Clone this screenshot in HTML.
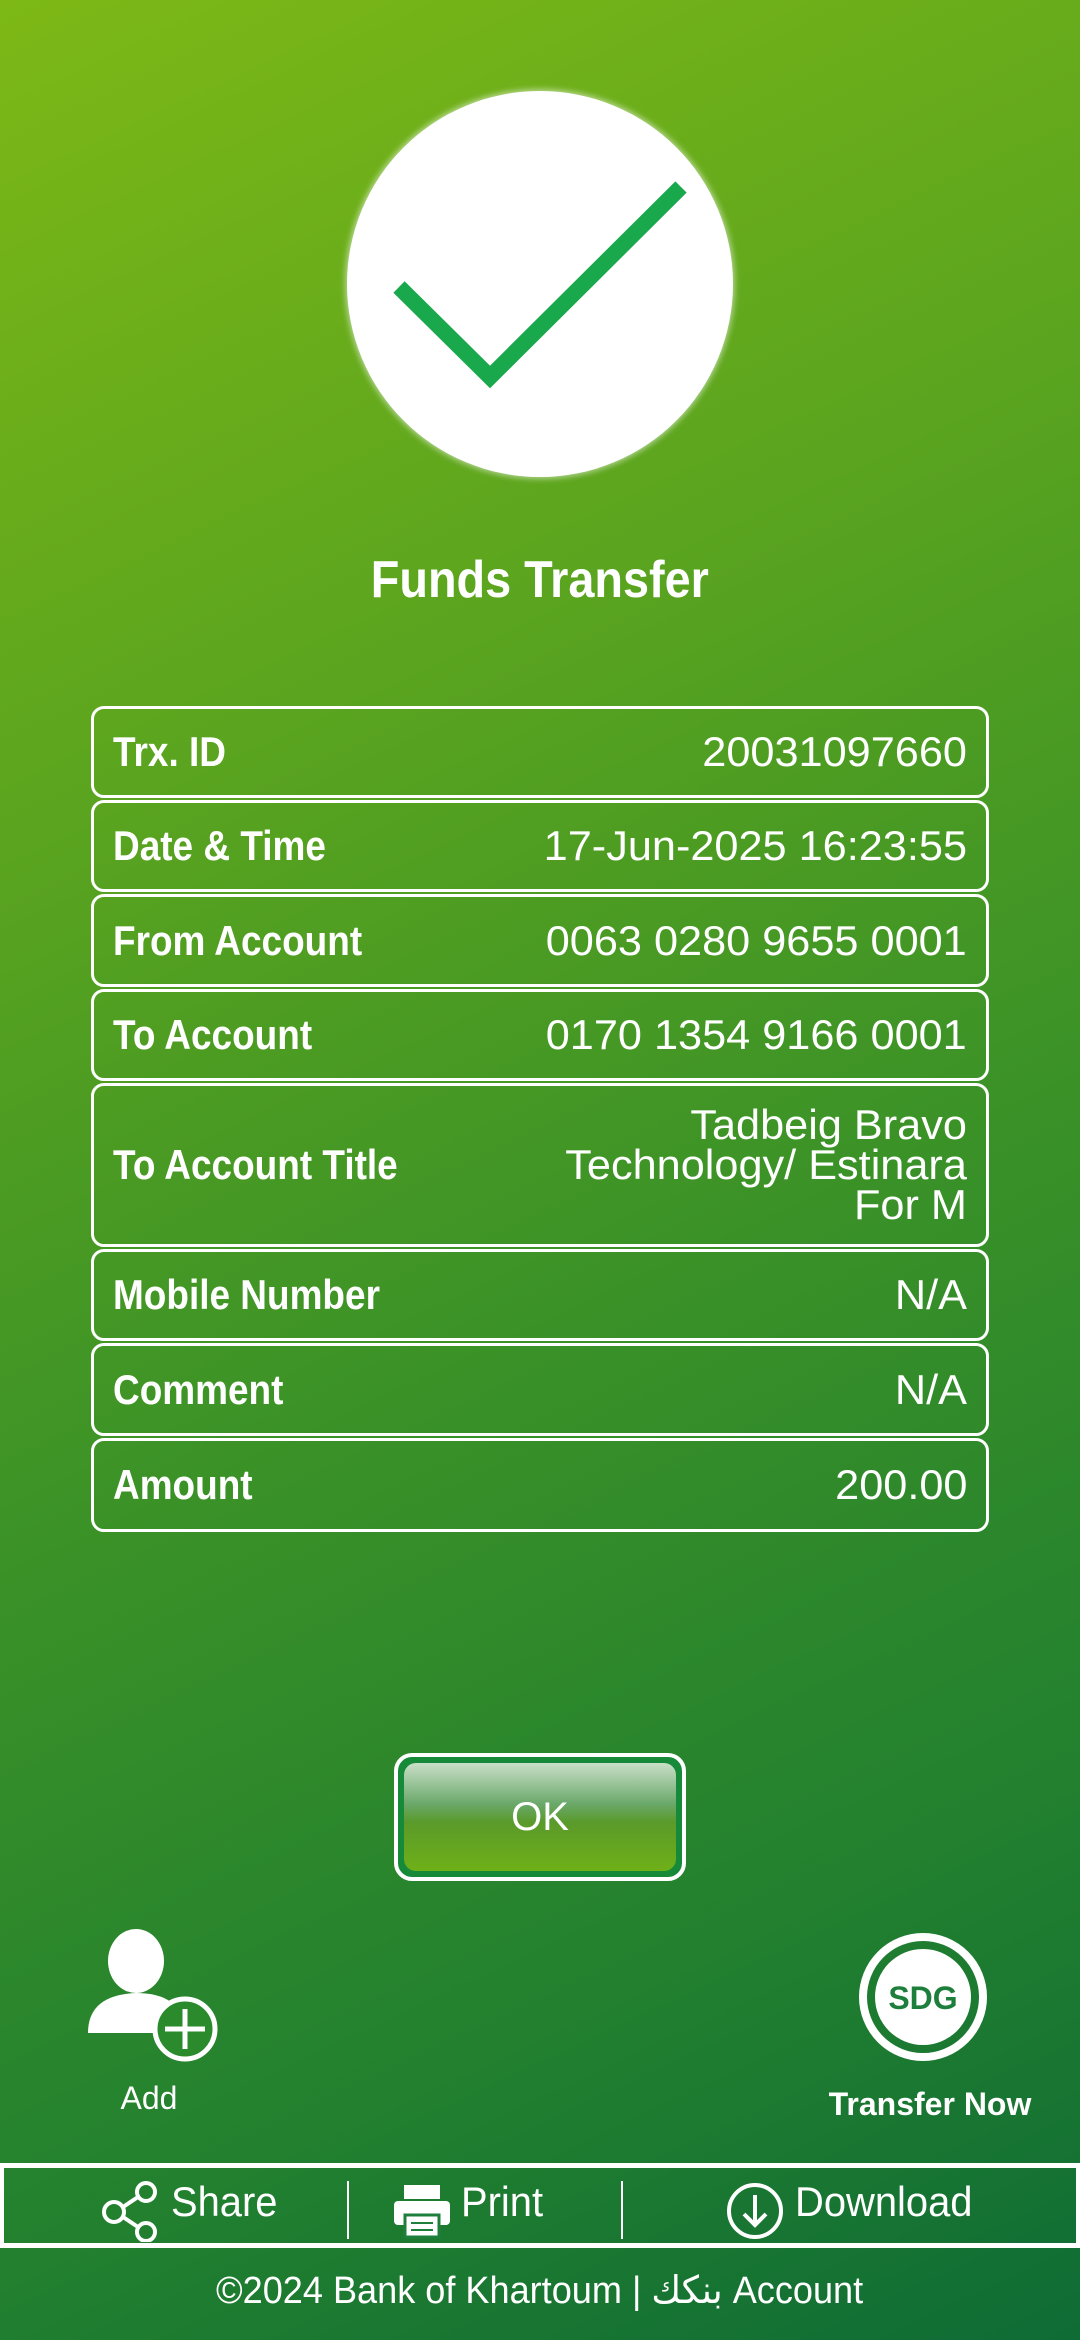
<!DOCTYPE html>
<html><head><meta charset="utf-8"><style>
*{margin:0;padding:0;box-sizing:border-box}
body{width:1080px;height:2340px;overflow:hidden;position:relative;background:linear-gradient(155deg,#7db816 0%,#5aa41f 30%,#3b9227 55%,#22802f 80%,#0f6c35 100%);font-family:"Liberation Sans","DejaVu Sans",sans-serif;color:#fff}
.abs{position:absolute}
.circle{left:347px;top:91px;width:386px;height:386px;border-radius:50%;background:#fff;box-shadow:0 0 6px 2px rgba(255,255,255,.5)}
h1{position:absolute;top:550px;left:0;width:1080px;text-align:center;font-size:52px;font-weight:bold}
h1 span{display:inline-block;transform:scaleX(.9)}
.row{position:absolute;left:91px;width:898px;border:3px solid #fff;border-radius:13px;display:flex;align-items:center;justify-content:space-between;padding:0 19px;font-size:42px}
.row .l{font-weight:bold;display:inline-block;transform:scaleX(.88);transform-origin:left center;white-space:nowrap}
.row .r{text-align:right;line-height:40px;display:inline-block;transform:scaleX(1.03);transform-origin:right center;white-space:nowrap}
.ok{left:394px;top:1753px;width:292px;height:128px;border:4px solid #fff;border-radius:18px;background:#178a3a;padding:6px}
.ok div{width:100%;height:100%;border-radius:12px;background:linear-gradient(#c9dfc8 0%,#6aa86a 38%,#5a9a2a 55%,#6fb018 100%);display:flex;align-items:center;justify-content:center;font-size:40px}
.bar{left:0;top:2163px;width:1080px;height:85px;border:5px solid #fff;border-left-width:4px;border-right-width:4px}
.bt{position:absolute;font-size:42px;top:2178px;transform:scaleX(.95);transform-origin:left center}
.div{position:absolute;top:2181px;width:2px;height:58px;background:#fff}
</style></head><body>
<div class="abs circle"></div>
<svg class="abs" style="left:0;top:0" width="1080" height="500"><polyline points="399,287 490,377 681,187" fill="none" stroke="#1aa84c" stroke-width="16"/></svg>
<h1><span>Funds Transfer</span></h1>
<div class="row" style="top:706px;height:92px"><span class="l">Trx. ID</span><span class="r">20031097660</span></div>
<div class="row" style="top:800px;height:92px"><span class="l">Date &amp; Time</span><span class="r">17-Jun-2025 16:23:55</span></div>
<div class="row" style="top:894px;height:93px"><span class="l">From Account</span><span class="r">0063 0280 9655 0001</span></div>
<div class="row" style="top:989px;height:92px"><span class="l">To Account</span><span class="r">0170 1354 9166 0001</span></div>
<div class="row" style="top:1083px;height:164px"><span class="l">To Account Title</span><span class="r">Tadbeig Bravo<br>Technology/ Estinara<br>For M</span></div>
<div class="row" style="top:1249px;height:92px"><span class="l">Mobile Number</span><span class="r">N/A</span></div>
<div class="row" style="top:1343px;height:93px"><span class="l">Comment</span><span class="r">N/A</span></div>
<div class="row" style="top:1438px;height:94px"><span class="l">Amount</span><span class="r">200.00</span></div>
<div class="abs ok"><div>OK</div></div>
<svg class="abs" style="left:80px;top:1925px" width="150" height="145">
<ellipse cx="56" cy="36" rx="28" ry="32" fill="#fff"/>
<path d="M8 108 Q8 70 56 68 Q90 68 100 88 L100 108 Z" fill="#fff"/>
<circle cx="105" cy="104" r="30" fill="#2a8a2c" stroke="#fff" stroke-width="5"/>
<path d="M105 84v40M85 104h40" stroke="#fff" stroke-width="5"/>
</svg>
<div class="abs" style="left:109px;top:2080px;font-size:32px;width:80px;text-align:center">Add</div>
<svg class="abs" style="left:856px;top:1930px" width="134" height="134">
<circle cx="67" cy="67" r="60" fill="none" stroke="#fff" stroke-width="8"/>
<circle cx="67" cy="67" r="48" fill="#fff"/>
<text x="67" y="79" text-anchor="middle" font-family="Liberation Sans" font-weight="bold" font-size="32" fill="#1e7f3c">SDG</text>
</svg>
<div class="abs" style="left:810px;top:2086px;font-size:32px;width:240px;text-align:center;font-weight:bold">Transfer Now</div>
<div class="abs bar"></div>
<svg class="abs" style="left:100px;top:2180px" width="64" height="62"><g fill="none" stroke="#fff" stroke-width="4"><circle cx="14" cy="32" r="10"/><circle cx="46" cy="12" r="9"/><circle cx="46" cy="52" r="9"/><path d="M23 27l15-10M23 37l15 10"/></g></svg>
<div class="bt" style="left:171px">Share</div>
<div class="div" style="left:347px"></div>
<svg class="abs" style="left:392px;top:2183px" width="60" height="56"><path d="M12 2h36v14H12z" fill="#fff"/><rect x="2" y="18" width="56" height="24" rx="4" fill="#fff"/><rect x="13" y="32" width="34" height="22" fill="#fff" stroke="#1e7f3c" stroke-width="3"/><path d="M19 40h22M19 47h22" stroke="#1e7f3c" stroke-width="2"/></svg>
<div class="bt" style="left:461px">Print</div>
<div class="div" style="left:621px"></div>
<svg class="abs" style="left:724px;top:2181px" width="60" height="60"><circle cx="31" cy="30" r="26" fill="none" stroke="#fff" stroke-width="4"/><path d="M31 14v30M20 33l11 11 11-11" fill="none" stroke="#fff" stroke-width="4"/></svg>
<div class="bt" style="left:795px">Download</div>
<div class="abs" style="left:0;top:2268px;width:1080px;text-align:center;font-size:38px"><span style="display:inline-block;transform:scaleX(.95)">©2024 Bank of Khartoum | بنكك Account</span></div>
</body></html>
